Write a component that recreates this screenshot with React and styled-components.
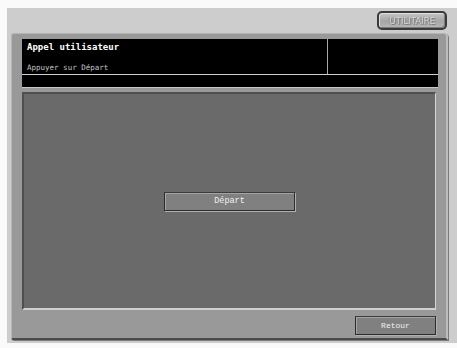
import styled, { createGlobalStyle } from 'styled-components';

const Global = createGlobalStyle`
  html, body {
    margin: 0;
    padding: 0;
    background: #fafafa;
  }
  body {
    font-family: "DejaVu Sans Mono", "Liberation Mono", monospace;
  }
`;

const Screen = styled.div`
  margin: 8px 0 0 7px;
  width: 450px;
  height: 335px;
  background: #cdcdcd;
  display: flex;
  flex-direction: column;
  padding: 0 9px 0 4px;
  box-sizing: border-box;
`;

const TopBar = styled.div`
  height: 25px;
  display: flex;
  justify-content: flex-end;
  align-items: flex-start;
  padding-top: 3px;
  box-sizing: border-box;
`;

const UtilityButton = styled.button`
  width: 70px;
  height: 19px;
  margin-right: 1px;
  border: 2px solid #3a3a3a;
  border-radius: 5px;
  background: linear-gradient(#c4c4c4, #a6a6a6 55%, #b8b8b8);
  box-shadow: inset 1px 1px 0 #e0e0e0, inset -1px -1px 0 #7c7c7c;
  color: #d8d8d8;
  font-family: "DejaVu Sans", sans-serif;
  font-size: 9px;
  letter-spacing: -0.2px;
  text-shadow: 1px 1px 0 #777, -1px 0 0 #888;
  padding: 0;
`;

const Panel = styled.div`
  flex: 1;
  margin-bottom: 3px;
  background: #999999;
  border-top: 1px solid #b4b4b4;
  border-left: 1px solid #b4b4b4;
  border-right: 2px solid #bdbdbd;
  border-bottom: 2px solid #4a4a4a;
  border-radius: 3px 4px 0 2px;
  box-shadow: 1px 1px 0 #7a7a7a;
  padding: 5px 8px 0 10px;
  display: flex;
  flex-direction: column;
  box-sizing: border-box;
`;

const Header = styled.div`
  background: #000;
  border-bottom: 1px solid #c8c8c8;
  display: flex;
  flex-direction: column;
`;

const HeaderTop = styled.div`
  height: 35px;
  display: grid;
  grid-template-columns: 306px 1fr;
  border-bottom: 1px solid #d0d0d0;
`;

const TitleCell = styled.div`
  border-right: 1px solid #a8a8a8;
  padding: 3px 0 1px 5px;
  display: flex;
  flex-direction: column;
  justify-content: space-between;
`;

const Title = styled.div`
  color: #fff;
  font-size: 9px;
  font-weight: bold;
  line-height: 11px;
`;

const Subtitle = styled.div`
  color: #c4c4c4;
  font-size: 7.5px;
  line-height: 10px;
`;

const HeaderStrip = styled.div`
  height: 12px;
`;

const Work = styled.div`
  margin-top: 4px;
  margin-right: 2px;
  height: 218px;
  background: #6a6a6a;
  border-top: 2px solid #4f4f4f;
  border-left: 2px solid #4f4f4f;
  border-right: 1px solid #d6d6d6;
  border-bottom: 2px solid #cfcfcf;
  box-sizing: border-box;
  display: flex;
  align-items: center;
  justify-content: center;
`;

const Button = styled.button`
  width: ${({ $w }) => $w}px;
  height: 19px;
  background: #808080;
  border: 1px solid #2c2c2c;
  border-top-color: #3c3c3c;
  box-shadow: inset 1px 1px 0 #a4a4a4, 1px 1px 0 #b0b0b0;
  color: #f2f2f2;
  font-family: "Liberation Mono", monospace;
  font-size: ${({ $fs }) => $fs}px;
  font-weight: normal;
  padding: 0;
`;

const Footer = styled.div`
  display: flex;
  justify-content: flex-end;
  padding: 6px 2px 0 0;
`;

export default function App() {
  return (
    <>
      <Global />
      <Screen>
        <TopBar>
          <UtilityButton>UTILITAIRE</UtilityButton>
        </TopBar>
        <Panel>
          <Header>
            <HeaderTop>
              <TitleCell>
                <Title>Appel utilisateur</Title>
                <Subtitle>Appuyer sur Départ</Subtitle>
              </TitleCell>
              <div />
            </HeaderTop>
            <HeaderStrip />
          </Header>
          <Work>
            <Button $w={131} $fs={8.5}>Départ</Button>
          </Work>
          <Footer>
            <Button $w={81} $fs={8}>Retour</Button>
          </Footer>
        </Panel>
      </Screen>
    </>
  );
}
